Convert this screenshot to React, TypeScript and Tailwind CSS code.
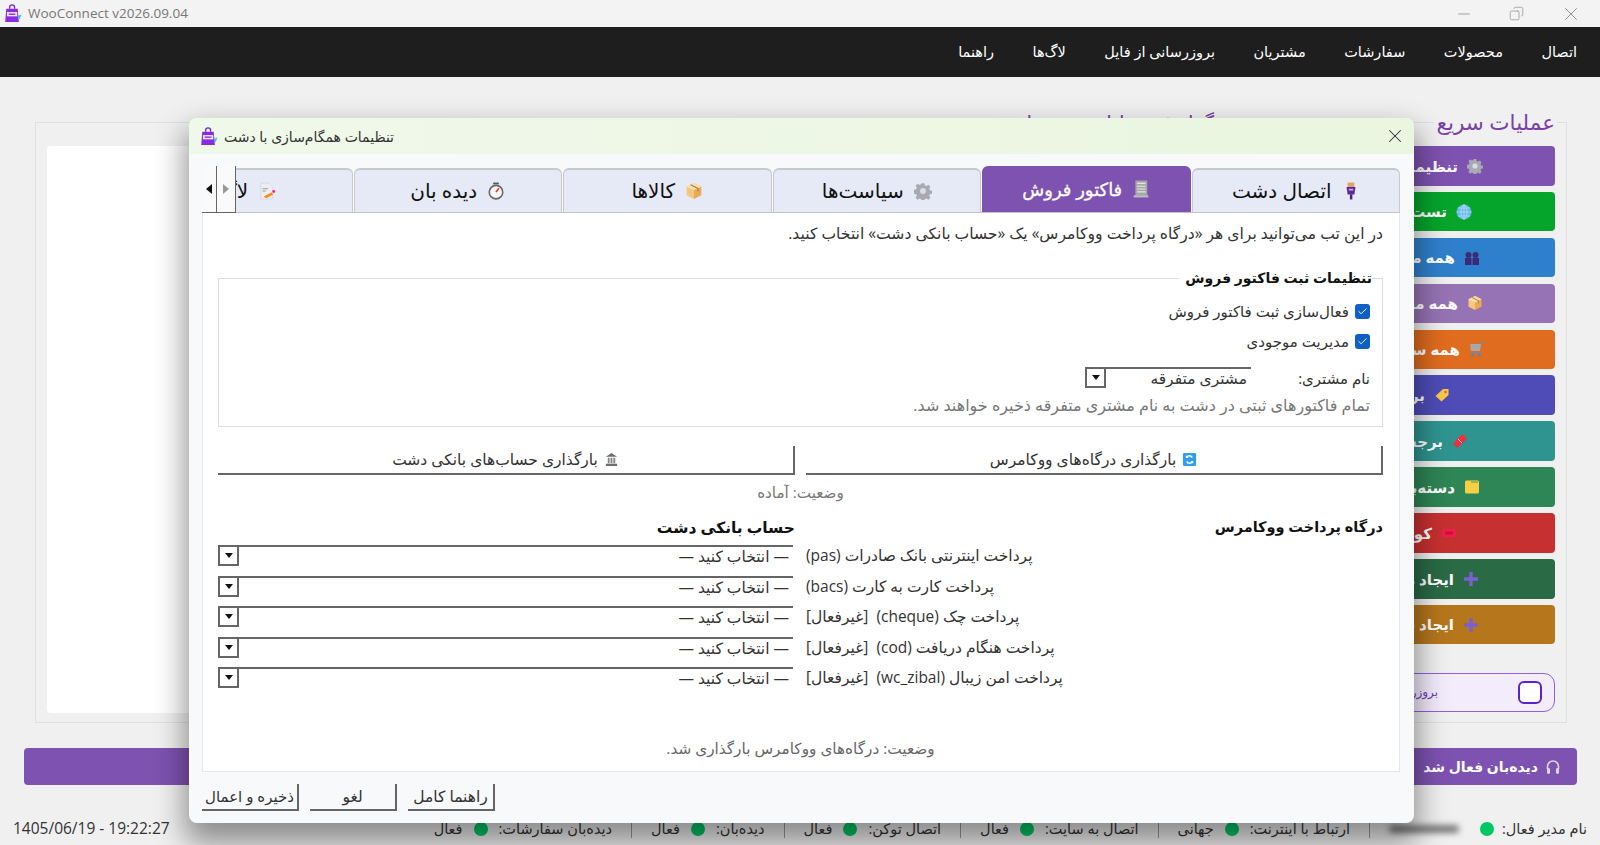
// App.tsx
import React from 'react';
import { Check, Copy, Minus, X } from 'lucide-react';

const FONT = "[font-family:'Open_Sans','DejaVu_Sans',sans-serif]";

type IconProps = { className?: string };

// small colour icons, the app draws these as emoji
const AppLogo: React.FC<IconProps> = ({ className }) => (
    <svg viewBox="0 0 20 20" className={className}>
        <path d="M7 5V3.6a2.6 2.6 0 0 1 5.2 0V5" fill="none" stroke="#6d28c9" strokeWidth="1.4" />
        <path d="M3.5 5h12l1.2 14H2.3z" fill="#8a2be2" />
        <rect x="4.2" y="8.5" width="10.8" height="4.5" fill="#efe4ff" />
        <rect x="6" y="10" width="7" height="1.4" fill="#7a2fd0" />
        <path d="M15 13l4.5-2-2 5z" fill="#22c7d9" />
    </svg>
);

const GearIcon: React.FC<IconProps> = ({ className }) => (
    <svg viewBox="0 0 16 16" className={className}>
        <path
            d="M6.7 1h2.6l.4 2 1.4.6 1.7-1.1 1.8 1.8-1.1 1.7.6 1.4 2 .4v2.6l-2 .4-.6 1.4 1.1 1.7-1.8 1.8-1.7-1.1-1.4.6-.4 2H6.7l-.4-2-1.4-.6-1.7 1.1-1.8-1.8 1.1-1.7-.6-1.4-2-.4V6.8l2-.4.6-1.4-1.1-1.7 1.8-1.8 1.7 1.1 1.4-.6z"
            fill="#a9a9b4"
        />
        <circle cx="8" cy="8" r="2.6" fill="#dcdce6" />
    </svg>
);

const GlobeIcon: React.FC<IconProps> = ({ className }) => (
    <svg viewBox="0 0 16 16" className={className}>
        <circle cx="8" cy="8" r="7.5" fill="#63b8e8" />
        <path d="M.5 8h15M8 .5v15M2 4h12M2 12h12M8 .5C4 4 4 12 8 15.5M8 .5c4 3.5 4 11.5 0 15" stroke="#b6def5" strokeWidth=".8" fill="none" />
    </svg>
);

const PeopleIcon: React.FC<IconProps> = ({ className }) => (
    <svg viewBox="0 0 16 16" className={className}>
        <circle cx="4.5" cy="5" r="3" fill="#3c2a78" />
        <circle cx="11.5" cy="5" r="3" fill="#3c2a78" />
        <rect x="1" y="8" width="6.5" height="7" fill="#3c2a78" />
        <rect x="8.5" y="8" width="6.5" height="7" fill="#3c2a78" />
    </svg>
);

const BoxIcon: React.FC<IconProps> = ({ className }) => (
    <svg viewBox="0 0 16 16" className={className}>
        <path d="M8 1l6.5 3.2v7.6L8 15z" fill="#e8a95a" />
        <path d="M8 1L1.5 4.2v7.6L8 15z" fill="#f5c77e" />
        <path d="M8 7.4L1.5 4.2 8 1l6.5 3.2z" fill="#fbe0ab" />
        <path d="M5 2.5l6.5 3.2v2.5" stroke="#b9793a" strokeWidth="1" fill="none" />
    </svg>
);

const CartIcon: React.FC<IconProps> = ({ className }) => (
    <svg viewBox="0 0 16 16" className={className}>
        <path d="M1 3h11l-1 7H2z" fill="#a7a7ad" />
        <path d="M12 3l1-2h2M2 12h10" stroke="#5a8fc0" strokeWidth="1.2" fill="none" />
        <circle cx="3.5" cy="14" r="1.4" fill="#4f86bd" />
        <circle cx="10.5" cy="14" r="1.4" fill="#4f86bd" />
    </svg>
);

const TagIcon: React.FC<IconProps> = ({ className }) => (
    <svg viewBox="0 0 16 16" className={className}>
        <path d="M9 2h5.5V8l-7 6.5L1.5 9z" fill="#f7c948" />
        <circle cx="11.5" cy="5" r="1.2" fill="#d9534f" />
    </svg>
);

const TicketIcon: React.FC<IconProps> = ({ className }) => (
    <svg viewBox="0 0 16 16" className={className}>
        <path d="M10.5 1L15 5.5 5.5 15 1 10.5l1.5-1.5 1 .5.5-1-.5-1z" fill="#ef2e3f" />
        <path d="M6 6l4 4" stroke="#ffc0c8" strokeWidth="1" />
    </svg>
);

const FolderIcon: React.FC<IconProps> = ({ className }) => (
    <svg viewBox="0 0 16 16" className={className}>
        <rect x="1" y="1.5" width="14" height="13" rx="1.5" fill="#f7cf45" />
        <rect x="7" y="1.5" width="7" height="2.5" fill="#a4b14f" />
    </svg>
);

const CouponIcon: React.FC<IconProps> = ({ className }) => (
    <svg viewBox="0 0 16 16" className={className}>
        <rect x="1" y="4" width="14" height="8" rx="2" fill="#ee1f4b" />
        <rect x="4" y="6.5" width="8" height="3" fill="#c41140" />
    </svg>
);

const PlusIcon: React.FC<IconProps> = ({ className }) => (
    <svg viewBox="0 0 16 16" className={className}>
        <path d="M8 1v14M1 8h14" stroke="#7a5fd0" strokeWidth="3.4" />
    </svg>
);

const HeadsetIcon: React.FC<IconProps> = ({ className }) => (
    <svg viewBox="0 0 16 16" className={className}>
        <path d="M2.5 10V7.5a5.5 5.5 0 0 1 11 0V10" stroke="#d8d8de" strokeWidth="1.6" fill="none" />
        <rect x="2" y="9" width="3" height="6" rx="1.4" fill="#d8d8de" />
        <rect x="11" y="9" width="3" height="6" rx="1.4" fill="#d8d8de" />
    </svg>
);

const PlugIcon: React.FC<IconProps> = ({ className }) => (
    <svg viewBox="0 0 16 16" className={className}>
        <rect x="5" y="0.5" width="6" height="4" fill="#e2a45c" />
        <path d="M4 4.5h8l-1 6.5H5z" fill="#5b2a94" />
        <rect x="7" y="11" width="2.2" height="4.5" fill="#4a2080" />
        <rect x="6" y="6" width="4" height="1.6" fill="#c9a6ee" />
    </svg>
);

const ReceiptIcon: React.FC<IconProps> = ({ className }) => (
    <svg viewBox="0 0 16 16" className={className}>
        <rect x="3" y="0.5" width="10.5" height="13" fill="#a8a8a8" />
        <path d="M4.5 3h7.5M4.5 5.5h7.5M4.5 8h7.5M4.5 10.5h7.5" stroke="#e4e4e4" strokeWidth="1" />
        <path d="M1.5 13.5h13v2h-13z" fill="#bdbdbd" />
    </svg>
);

const StopwatchIcon: React.FC<IconProps> = ({ className }) => (
    <svg viewBox="0 0 16 16" className={className}>
        <rect x="5.5" y="0.5" width="5" height="1.6" fill="#555" />
        <circle cx="8" cy="9" r="6" fill="#f6f6f6" stroke="#666" strokeWidth="1.4" />
        <path d="M8 9l2.5-3.5" stroke="#e5383b" strokeWidth="1.5" />
    </svg>
);

const DocIcon: React.FC<IconProps> = ({ className }) => (
    <svg viewBox="0 0 16 16" className={className}>
        <path d="M2.5 1h7L13 4.5V15H2.5z" fill="#eeeef2" stroke="#d0d0d8" strokeWidth=".6" />
        <path d="M4 6h5M4 8h3" stroke="#9a9aa8" strokeWidth="1" />
        <path d="M5 13l7-4 1.5 2-6 3.5z" fill="#f58a1f" />
        <circle cx="14" cy="8.5" r="1.3" fill="#ef2e7a" />
    </svg>
);

const BankIcon: React.FC<IconProps> = ({ className }) => (
    <svg viewBox="0 0 16 16" className={className}>
        <path d="M8 1l6 4H2z" fill="#6f6f6f" />
        <path d="M4 6h2v6H4zM7 6h2v6H7zM10 6h2v6h-2z" fill="#858585" />
        <rect x="2" y="12.5" width="12" height="2.5" fill="#6f6f6f" />
    </svg>
);

const RefreshIcon: React.FC<IconProps> = ({ className }) => (
    <svg viewBox="0 0 16 16" className={className}>
        <rect x="1" y="1" width="14" height="14" rx="1.5" fill="#2f9df0" />
        <path d="M11 6a3.4 3.4 0 0 0-6-.5M5 10a3.4 3.4 0 0 0 6 .5" stroke="#fff" strokeWidth="1.5" fill="none" />
        <path d="M4 3.5v3h3zM12 12.5v-3H9z" fill="#fff" />
    </svg>
);

const ArrowDown: React.FC = () => (
    <svg viewBox="0 0 8 5" className="h-[5px] w-[8px]">
        <path d="M0 0h8L4 5z" fill="#111" />
    </svg>
);

const quickActions = [
    { label: 'تنظیمات همگام‌سازی با دشت', bg: 'bg-[#7e52b0]', pad: 'pr-[72px]', Icon: GearIcon },
    { label: 'تست اتصال به سایت', bg: 'bg-[#05a52c]', pad: 'pr-[83px]', Icon: GlobeIcon },
    { label: 'همه مشتریان', bg: 'bg-[#2f80cc]', pad: 'pr-[75px]', Icon: PeopleIcon },
    { label: 'همه محصولات', bg: 'bg-[#9673b4]', pad: 'pr-[72px]', Icon: BoxIcon },
    { label: 'همه سفارشات', bg: 'bg-[#e06c1f]', pad: 'pr-[70px]', Icon: CartIcon },
    { label: 'برچسب‌ها', bg: 'bg-[#4f4cb8]', pad: 'pr-[105px]', Icon: TagIcon },
    { label: 'برجسته‌ها', bg: 'bg-[#2f9490]', pad: 'pr-[87px]', Icon: TicketIcon },
    { label: 'دسته‌بندی‌ها', bg: 'bg-[#2e8555]', pad: 'pr-[75px]', Icon: FolderIcon },
    { label: 'کوپن‌ها', bg: 'bg-[#c73030]', pad: 'pr-[98px]', Icon: CouponIcon },
    { label: 'ایجاد مشتری', bg: 'bg-[#2a6a45]', pad: 'pr-[76px]', Icon: PlusIcon },
    { label: 'ایجاد سفارش', bg: 'bg-[#b6761c]', pad: 'pr-[76px]', Icon: PlusIcon },
];

const menuItems = ['اتصال', 'محصولات', 'سفارشات', 'مشتریان', 'بروزرسانی از فایل', 'لاگ‌ها', 'راهنما'];

const tabs = [
    { label: 'اتصال دشت', Icon: PlugIcon, active: false, pad: '' },
    { label: 'فاکتور فروش', Icon: ReceiptIcon, active: true, pad: '' },
    { label: 'سیاست‌ها', Icon: GearIcon, active: false, pad: '' },
    { label: 'کالاها', Icon: BoxIcon, active: false, pad: '' },
    { label: 'دیده بان', Icon: StopwatchIcon, active: false, pad: '' },
    { label: 'لاگ‌ها', Icon: DocIcon, active: false, pad: 'pr-[18px]' },
];

const gateways = [
    'پرداخت اینترنتی بانک صادرات (pas)',
    'پرداخت کارت به کارت (bacs)',
    'پرداخت چک (cheque)  [غیرفعال]',
    'پرداخت هنگام دریافت (cod)  [غیرفعال]',
    'پرداخت امن زیبال (wc_zibal)  [غیرفعال]',
];

const statusItems = [
    { label: 'ارتباط با اینترنت:', value: 'جهانی' },
    { label: 'اتصال به سایت:', value: 'فعال' },
    { label: 'اتصال توکن:', value: 'فعال' },
    { label: 'دیده‌بان:', value: 'فعال' },
    { label: 'دیده‌بان سفارشات:', value: 'فعال' },
];

const Dot: React.FC = () => <span className="h-[14px] w-[14px] shrink-0 rounded-full bg-[#00c865]" />;

const Separator: React.FC = () => <span className="h-[18px] w-px bg-[#9a9a9a]" />;

// flat combo box, the way the Qt style draws it: top rule and a small arrow button
const Combo: React.FC<{ value: string; className?: string }> = ({ value, className }) => (
    <div dir="rtl" className={`flex h-[21px] border-t-2 border-[#666] ${className ?? ''}`}>
        <span className="flex-1 pr-[4px] text-[15.5px] leading-[19px] whitespace-nowrap text-[#333]">{value}</span>
        <span className="flex w-[21px] items-center justify-center border-2 border-t-0 border-[#666] bg-white">
            <ArrowDown />
        </span>
    </div>
);

const FlatButton: React.FC<{ className?: string; children: React.ReactNode }> = ({ className, children }) => (
    <button className={`flex items-center justify-center border-r-2 border-b-2 border-[#666] text-[15.5px] text-[#333] ${className ?? ''}`}>
        {children}
    </button>
);

const InvoiceTab: React.FC = () => (
    <div dir="rtl" className="flex h-[559px] flex-col border border-t-0 border-[#e6e6e6] bg-white pr-[16px] pl-[15px]">
        <p className="mt-[10px] h-[20px] text-[15.6px] leading-[20px] text-[#333]">
            در این تب می‌توانید برای هر «درگاه پرداخت ووکامرس» یک «حساب بانکی دشت» انتخاب کنید.
        </p>

        {/* Invoice settings group */}
        <div className="relative mt-[35px] h-[149px] border border-[#dcdcdc] pt-[22px] pr-[12px]">
            <span className="absolute -top-[11px] right-[10px] bg-white pl-[6px] text-[14px] leading-[20px] font-bold text-[#111]">
                تنظیمات ثبت فاکتور فروش
            </span>
            <label className="flex h-[20px] items-center gap-[6px] text-[15px] text-[#333]">
                <span className="flex h-[15px] w-[15px] items-center justify-center rounded-[3px] bg-[#0f5fc4]">
                    <Check className="h-[11px] w-[11px] text-white" strokeWidth={2} />
                </span>
                فعال‌سازی ثبت فاکتور فروش
            </label>
            <label className="mt-[10px] flex h-[20px] items-center gap-[6px] text-[15px] text-[#333]">
                <span className="flex h-[15px] w-[15px] items-center justify-center rounded-[3px] bg-[#0f5fc4]">
                    <Check className="h-[11px] w-[11px] text-white" strokeWidth={2} />
                </span>
                مدیریت موجودی
            </label>
            <div className="mt-[16px] flex h-[21px] items-center gap-[19px] text-[15px] leading-[20px] text-[#333]">
                <span className="w-[100px]">نام مشتری:</span>
                <Combo value="مشتری متفرقه" className="w-[166px]" />
            </div>
            <p className="mt-[7px] text-[16px] leading-[20px] text-[#777]">
                تمام فاکتورهای ثبتی در دشت به نام مشتری متفرقه ذخیره خواهند شد.
            </p>
        </div>

        <div className="mt-[19px] grid h-[29px] grid-cols-2 gap-[11px]">
            <FlatButton className="gap-[6px]">
                <RefreshIcon className="h-[15px] w-[15px]" />
                بارگذاری درگاه‌های ووکامرس
            </FlatButton>
            <FlatButton className="gap-[6px]">
                <BankIcon className="h-[15px] w-[15px]" />
                بارگذاری حساب‌های بانکی دشت
            </FlatButton>
        </div>

        <p className="mt-[7px] h-[20px] text-center text-[15.2px] leading-[20px] text-[#777]">وضعیت: آماده</p>

        <div className="mt-[15px] grid h-[20px] grid-cols-2 gap-[11px] text-[14.5px] leading-[20px] font-bold text-[#111]">
            <span>درگاه پرداخت ووکامرس</span>
            <span className="text-[15.5px]">حساب بانکی دشت</span>
        </div>

        <div className="mt-[8px] flex flex-col gap-[9.6px]">
            {gateways.map(name => (
                <div key={name} className="grid h-[21px] grid-cols-2 items-center gap-[11px]">
                    <span className="whitespace-pre text-left text-[15.5px] leading-[21px] text-[#333]">{name}</span>
                    <Combo value="— انتخاب کنید —" className="mr-[2px]" />
                </div>
            ))}
        </div>

        <p className="mt-auto mb-[13px] h-[20px] text-center text-[15.3px] leading-[20px] text-[#666]">
            وضعیت: درگاه‌های ووکامرس بارگذاری شد.
        </p>
    </div>
);

const SyncDialog: React.FC = () => (
    <div className="absolute top-[118px] left-[189px] flex h-[705px] w-[1225px] flex-col rounded-[8px] bg-[#f8f9fb] shadow-[0_16px_30px_4px_rgba(0,0,0,0.42)]">
        <div className="flex h-[36px] shrink-0 items-center rounded-t-[8px] bg-gradient-to-r from-[#f0f8ea] to-[#eaf6e0] pr-[8px] pl-[10px]">
            <AppLogo className="h-[19px] w-[19px]" />
            <span dir="rtl" className="ml-[6px] text-[14px] text-[#333]">تنظیمات همگام‌سازی با دشت</span>
            <X className="ml-auto h-[22px] w-[22px] text-[#333]" strokeWidth={1.1} />
        </div>

        <div className="relative mx-[13px] mt-[12px] mr-[14px] h-[46px] shrink-0">
            <div dir="rtl" className="flex h-[46px] items-end gap-px overflow-hidden pl-[33px] [&>*]:shrink-0">
                {tabs.map(({ label, Icon, active, pad }) => (
                    <div
                        key={label}
                        className={
                            active
                                ? 'flex h-[46px] w-[208.5px] items-center justify-center gap-[10px] rounded-t-[6px] bg-[#7e52b0] text-[18px] text-white [-webkit-text-stroke:0.3px_white]'
                                : `flex h-[44px] w-[208.5px] items-center justify-center gap-[10px] rounded-t-[6px] border-x border-t-2 border-[#c9c9c9] bg-[#e6e9f6] text-[20px] text-[#111] ${pad}`
                        }
                    >
                        <Icon className="h-[18px] w-[18px] shrink-0" />
                        {label}
                    </div>
                ))}
            </div>
            <div className="absolute top-0 left-0 flex h-[47px] w-[34px] items-center border-r border-b border-[#666] bg-[#fafafa]">
                <span className="flex h-full w-[15px] items-center justify-center border-r border-[#666]">
                    <svg viewBox="0 0 6 10" className="h-[10px] w-[6px]"><path d="M6 0v10L0 5z" fill="#111" /></svg>
                </span>
                <span className="flex h-full flex-1 items-center justify-center">
                    <svg viewBox="0 0 6 10" className="h-[10px] w-[6px]"><path d="M0 0v10l6-5z" fill="#999" /></svg>
                </span>
            </div>
        </div>

        <div className="mx-[13px] mr-[14px] border-t border-[#c4c4c4]">
            <InvoiceTab />
        </div>

        <div className="mt-[12px] ml-[13px] flex h-[27px] gap-[11px]">
            <FlatButton className="w-[97px] text-[15px]"><span dir="rtl">ذخیره و اعمال</span></FlatButton>
            <FlatButton className="w-[87px]">لغو</FlatButton>
            <FlatButton className="w-[87px]"><span dir="rtl">راهنما کامل</span></FlatButton>
        </div>
    </div>
);

const App: React.FC = () => (
    <div className={`relative flex h-[845px] w-[1600px] flex-col overflow-hidden bg-[#f0f0f0] ${FONT}`}>
        {/* Window title bar */}
        <div className="flex h-[27px] shrink-0 items-center bg-[#f3f3f3] pr-[18px] pl-[3px]">
            <AppLogo className="h-[19px] w-[19px]" />
            <span className="ml-[6px] text-[13.5px] text-[#777]">WooConnect v2026.09.04</span>
            <div className="ml-auto flex items-center gap-[36px] text-[#8a8a8a]">
                <Minus className="h-[18px] w-[18px]" strokeWidth={1.1} />
                <Copy className="h-[15px] w-[15px] -scale-x-100" strokeWidth={1.1} />
                <X className="h-[22px] w-[22px]" strokeWidth={1} />
            </div>
        </div>

        {/* Menu bar */}
        <nav dir="rtl" className="flex h-[50px] shrink-0 items-center gap-[38.5px] bg-[#1e1e1e] pr-[23px] text-[14.5px] text-white">
            {menuItems.map(item => (
                <span key={item}>{item}</span>
            ))}
        </nav>

        <main className="mt-[45px] flex h-[601px] shrink-0 gap-[10px] pr-[33px] pl-[35px]">
            <section className="relative flex-1 border border-[#e0e0e0] px-[11px] pt-[23px] pb-[9px]">
                <span dir="rtl" className="absolute -top-[14px] right-[20px] text-[20px] leading-[28px] text-[#7b3fa8]">
                    گزارش عملیات و رویداد
                </span>
                <div className="h-full rounded-[4px] bg-white" />
            </section>

            <section dir="rtl" className="relative flex w-[322px] flex-col gap-[6.4px] border border-[#e0e0e0] px-[11px] pt-[23px]">
                <span className="absolute -top-[15px] right-[9px] bg-[#f0f0f0] px-[2px] text-[21.5px] leading-[28px] text-[#7b3fa8]">
                    عملیات سریع
                </span>
                {quickActions.map(({ label, bg, pad, Icon }) => (
                    <button key={label} className={`flex h-[39.5px] shrink-0 items-center gap-[9px] rounded-[4px] text-[15px] font-bold whitespace-nowrap text-white ${bg} ${pad}`}>
                        <Icon className="h-[16px] w-[16px] shrink-0" />
                        {label}
                    </button>
                ))}
                <div className="mt-[22px] flex h-[39px] items-center gap-[80px] rounded-[11px] border border-[#8f5fe8] bg-[#f3ecfd] pr-[12px]">
                    <span className="h-[23px] w-[24px] rounded-[6px] border-2 border-[#5b21d6] bg-white" />
                    <span className="text-[12px] text-[#6b3fb5]">بروزرسانی خودکار</span>
                </div>
            </section>
        </main>

        <div className="mt-[25px] flex h-[37px] shrink-0 gap-[10px] pr-[23px] pl-[24px]">
            <button className="flex-1 rounded-[4px] bg-[#7e52b0]" />
            <button dir="rtl" className="flex w-[360px] items-center gap-[7px] rounded-[4px] bg-[#7e52b0] pr-[16px] text-[14px] font-bold text-white">
                <HeadsetIcon className="h-[16px] w-[16px]" />
                دیده‌بان فعال شد
            </button>
        </div>

        {/* Status bar */}
        <footer className="mt-[31px] flex h-[26px] shrink-0 items-center justify-between pr-[13px] pl-[13px] text-[14.5px] text-[#333]">
            <span className="text-[15.5px]">1405/06/19 - 19:22:27</span>
            <div dir="rtl" className="flex items-center gap-[19px]">
                <span className="flex items-center gap-[8px]">
                    نام مدیر فعال:
                    <Dot />
                    <span className="mr-[13px] h-[8px] w-[70px] rounded-full bg-[#777] blur-[3px]" />
                </span>
                {statusItems.map(({ label, value }) => (
                    <React.Fragment key={label}>
                        <Separator />
                        <span className="flex items-center gap-[11px]">
                            {label}
                            <Dot />
                            {value}
                        </span>
                    </React.Fragment>
                ))}
            </div>
        </footer>

        <SyncDialog />
    </div>
);

export default App;
